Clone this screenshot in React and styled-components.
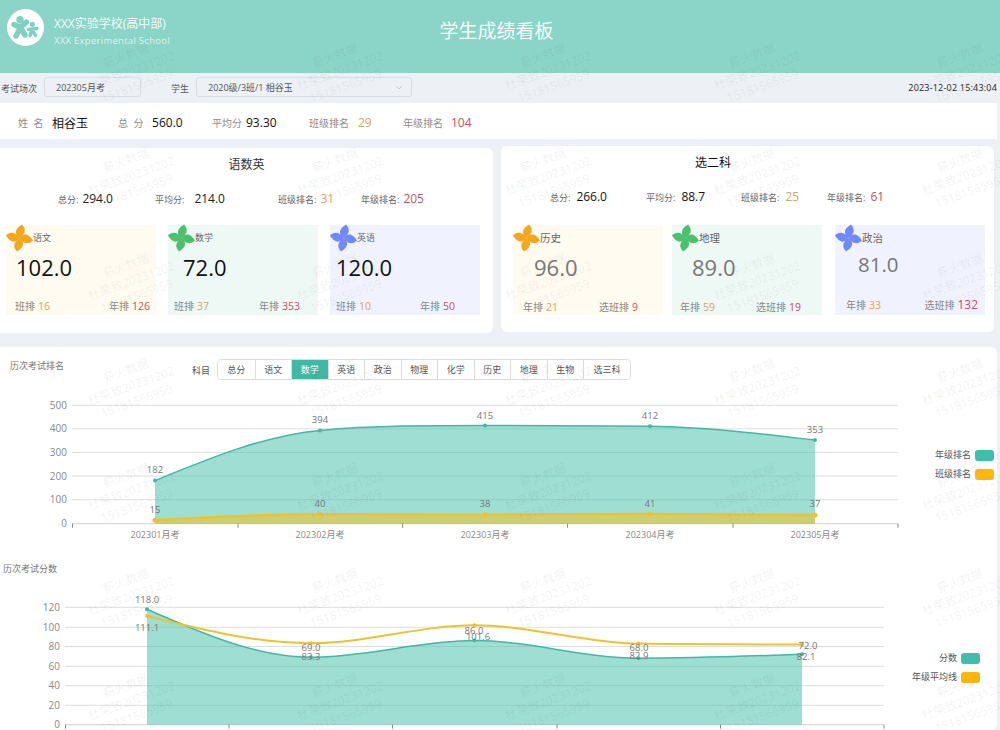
import styled, { createGlobalStyle } from "styled-components";

const GlobalStyle = createGlobalStyle`
  html, body {
    margin: 0;
    padding: 0;
    height: 730px;
    overflow: hidden;
    background: #edf0f5;
    font-family: "Open Sans", "Noto Sans CJK SC", sans-serif;
  }
`;

const Page = styled.div`
  position: relative;
  width: 1000px;
  height: 730px;
  overflow: hidden;
  background: #edf0f5;
`;

const Watermarks = styled.div`
  position: absolute;
  top: 18px;
  left: 27px;
  display: grid;
  grid-template-columns: repeat(5, 208.5px);
  grid-auto-rows: 105px;
  pointer-events: none;
`;

const Watermark = styled.div`
  display: flex;
  flex-direction: column;
  align-items: center;
  justify-content: center;
  font-size: 12px;
  line-height: 16px;
  color: rgba(60, 60, 60, 0.075);
  transform: rotate(-20deg);
`;

const Header = styled.header`
  display: grid;
  grid-template-columns: 1fr auto 1fr;
  height: 73px;
  padding: 9px 14px 0 7px;
  box-sizing: border-box;
  background: #8bd4c8;
  color: #fff;
`;

const Brand = styled.div`
  display: flex;
  align-items: flex-start;
  gap: 9px;
`;

const BrandText = styled.div`
  display: flex;
  flex-direction: column;
  padding-top: 7px;
`;

const SchoolName = styled.div`
  font-size: 12px;
  line-height: 16px;
  color: rgba(255, 255, 255, 0.92);
`;

const SchoolEnglish = styled.div`
  margin-top: 2px;
  font-size: 9.5px;
  line-height: 14px;
  letter-spacing: 0.28px;
  color: rgba(255, 255, 255, 0.72);
`;

const BoardTitle = styled.h1`
  margin: 8px 0 0;
  font-size: 19px;
  line-height: 28px;
  font-weight: 400;
  color: rgba(255, 255, 255, 0.95);
`;

const FilterBar = styled.div`
  display: flex;
  align-items: center;
  height: 30px;
  padding: 0 3px 2px 1px;
  box-sizing: border-box;
  font-size: 9px;
  color: #555;
`;

const FilterLabel = styled.span`
  margin-top: 3px;
  margin-left: ${(p) => p.$left || 0}px;
  margin-right: 7px;
`;

const SelectBox = styled.div`
  display: flex;
  align-items: center;
  justify-content: space-between;
  width: ${(p) => p.$width}px;
  height: 20px;
  padding: 1px 8px 0 11px;
  box-sizing: border-box;
  border: 1px solid #d8dce4;
  border-radius: 3px;
  color: #555;
`;

const Clock = styled.span`
  margin-left: auto;
  letter-spacing: 0.2px;
  color: #222;
`;

const InfoBar = styled.div`
  display: flex;
  align-items: center;
  width: 997px;
  height: 36px;
  padding: 3px 0 0 18px;
  box-sizing: border-box;
  background: #fff;
`;

const InfoItem = styled.div`
  display: flex;
  align-items: center;
  gap: ${(p) => p.$gap}px;
  width: ${(p) => p.$width}px;
`;

const InfoLabel = styled.span`
  font-size: 10px;
  letter-spacing: ${(p) => p.$spread || 0}px;
  color: #8c8c8c;
  white-space: pre;
`;

const InfoValue = styled.span`
  font-size: 12px;
  color: ${(p) => p.$color || "#111"};
`;

const CardRow = styled.div`
  display: flex;
  gap: 8px;
  margin-top: 7px;
`;

const Card = styled.section`
  width: ${(p) => p.$width}px;
  height: ${(p) => p.$height}px;
  margin-top: ${(p) => p.$top}px;
  padding-top: 9px;
  box-sizing: border-box;
  background: #fff;
  border-radius: ${(p) => (p.$flushLeft ? "0 6px 6px 0" : "6px")};
`;

const CardTitle = styled.h2`
  margin: 0;
  padding-right: ${(p) => p.$shift}px;
  font-size: 12px;
  line-height: 16px;
  font-weight: 400;
  text-align: center;
  color: ${(p) => p.$color};
`;

const StatRow = styled.div`
  display: grid;
  grid-template-columns: ${(p) => p.$columns};
  align-items: baseline;
  margin-top: 17px;
  padding-left: ${(p) => p.$left}px;
`;

const Stat = styled.div`
  display: flex;
  align-items: baseline;
  gap: ${(p) => p.$gap || 4}px;
`;

const StatLabel = styled.span`
  font-size: 9px;
  color: #666;
  white-space: nowrap;
`;

const StatValue = styled.span`
  font-size: 12px;
  color: ${(p) => p.$color || "#222"};
`;

const SubjectRow = styled.div`
  display: grid;
  grid-template-columns: ${(p) => p.$columns};
  margin-top: ${(p) => p.$top}px;
  padding-left: ${(p) => p.$left}px;
`;

const Subject = styled.div`
  display: flex;
  flex-direction: column;
  width: 150px;
  height: 90px;
  box-sizing: border-box;
  background: ${(p) => p.$bg};
`;

const SubjectHead = styled.div`
  display: flex;
  align-items: center;
  height: 28px;
  margin-top: -1px;
  font-size: ${(p) => p.$size}px;
  color: #666;
`;

const SubjectName = styled.span`
  margin-bottom: 2px;
`;

const SubjectScore = styled.div`
  height: 30px;
  margin-top: ${(p) => p.$top}px;
  padding-left: ${(p) => p.$left}px;
  font-size: ${(p) => p.$size}px;
  line-height: 30px;
  color: ${(p) => p.$color};
`;

const SubjectFoot = styled.div`
  display: flex;
  justify-content: space-between;
  align-items: baseline;
  margin-top: auto;
  padding: 0 ${(p) => p.$right}px ${(p) => p.$bottom}px ${(p) => p.$left}px;
`;

const Rank = styled.div`
  display: flex;
  align-items: baseline;
  gap: 3px;
  font-size: 10px;
  color: #888;
`;

const RankValue = styled.span`
  font-size: ${(p) => p.$size || 10.5}px;
  color: ${(p) => p.$color};
`;

const ChartPanel = styled.section`
  width: 997px;
  height: 383px;
  margin-top: 14px;
  overflow: hidden;
  background: #fff;
  border-radius: 0 6px 6px 0;
`;

const ChartHead = styled.div`
  display: flex;
  align-items: flex-start;
  height: 33px;
  padding: 12px 0 0 10px;
  box-sizing: border-box;
`;

const ChartTitle = styled.div`
  font-size: 9px;
  line-height: 14px;
  color: #777;
`;

const SecondTitle = styled(ChartTitle)`
  margin: 17px 0 0 3px;
`;

const TabLabel = styled.span`
  margin: 6px 7px 0 128px;
  font-size: 9px;
  line-height: 12px;
  color: #555;
`;

const Tabs = styled.div`
  display: flex;
  height: 21px;
  border: 1px solid #ddd;
  border-radius: 4px;
  overflow: hidden;
  box-sizing: border-box;
`;

const Tab = styled.div`
  width: ${(p) => p.$width || 36.5}px;
  box-sizing: border-box;
  border-left: ${(p) => (p.$first ? "none" : "1px solid #ddd")};
  font-size: 9px;
  line-height: 19px;
  text-align: center;
  color: ${(p) => (p.$active ? "#fff" : "#555")};
  background: ${(p) => (p.$active ? "#40b9a4" : "#fff")};
`;

const ChartRow = styled.div`
  display: flex;
  margin-top: ${(p) => p.$top}px;
`;

const ChartSvg = styled.svg`
  display: block;
  flex: none;
  font-family: "Open Sans", "Noto Sans CJK SC", sans-serif;
`;

const Legend = styled.div`
  display: flex;
  flex: 1;
  flex-direction: column;
  justify-content: flex-start;
  align-items: flex-end;
  gap: 7px;
  padding: ${(p) => p.$top}px ${(p) => p.$right}px 0 0;
`;

const LegendItem = styled.div`
  display: flex;
  align-items: center;
  gap: 4px;
  font-size: 9px;
  line-height: 12px;
  color: #555;
`;

const Swatch = styled.span`
  width: 19px;
  height: 11px;
  border-radius: 3px;
  background: ${(p) => p.$color};
`;

const TEAL = "#45b6a3";
const YELLOW = "#ecc232";
const ORANGE = "#d8a262";
const RED = "#c2525c";

const smoothPath = (pts) => {
  const n = pts.length - 1;
  const d = pts.slice(1).map((p, i) => (p[1] - pts[i][1]) / (p[0] - pts[i][0]));
  const m = pts.map((_, i) => {
    if (i === 0 || i === n) return 0;
    if (d[i - 1] * d[i] <= 0) return 0;
    const limit = 3 * Math.min(Math.abs(d[i - 1]), Math.abs(d[i]));
    return Math.sign(d[i]) * Math.min(Math.abs(d[i - 1] + d[i]) / 2, limit);
  });
  m[0] = (3 * d[0] - m[1]) / 2;
  m[n] = (3 * d[n - 1] - m[n - 1]) / 2;
  let path = `M${pts[0][0]} ${pts[0][1]}`;
  for (let i = 0; i < n; i++) {
    const h = (pts[i + 1][0] - pts[i][0]) / 3;
    path += ` C${pts[i][0] + h} ${pts[i][1] + m[i] * h} ${pts[i + 1][0] - h} ${pts[i + 1][1] - m[i + 1] * h} ${pts[i + 1][0]} ${pts[i + 1][1]}`;
  }
  return path;
};

const Pinwheel = ({ color }) => (
  <svg width="27" height="28" viewBox="0 0 27 28">
    {[0, 90, 180, 270].map((deg) => (
      <path
        key={deg}
        transform={`rotate(${deg} 13.5 14)`}
        d="M13.5 14 C9.5 11 7 6 16 0.5 C19.5 4 20.5 9.5 13.5 14 Z"
        fill={color}
      />
    ))}
  </svg>
);

const Logo = () => (
  <svg width="38" height="38" viewBox="0 0 38 38">
    <circle cx="18.5" cy="18.5" r="18.5" fill="#fff" />
    <g fill="none" stroke="#7fcfc2" strokeLinecap="round" strokeLinejoin="round">
      <path d="M7 15.5 L13.5 18.5 L19.5 13 M13.5 18.5 L9 27 M13.5 18.5 L18 26" strokeWidth="5.4" />
      <path d="M21.5 20.5 L30 19.5 M25.5 20.5 L23 26.5 M25.5 20.5 L28.5 26.5" strokeWidth="3.4" />
    </g>
    <circle cx="13" cy="10.7" r="3.7" fill="#7fcfc2" />
    <circle cx="25.3" cy="15.3" r="2.6" fill="#7fcfc2" />
  </svg>
);

const Chevron = () => (
  <svg width="8" height="5" viewBox="0 0 8 5">
    <path d="M1 1 L4 4 L7 1" fill="none" stroke="#c4c8d0" strokeWidth="1" />
  </svg>
);

const Axis = ({ left, right, zero, lines, ticks, yLabels }) => (
  <g>
    {lines.map((y) => (
      <line key={y} x1={left} x2={right} y1={y} y2={y} stroke="#dedede" strokeWidth="1" />
    ))}
    <line x1={left} x2={right} y1={zero} y2={zero} stroke="#cfcfcf" strokeWidth="1" />
    {ticks.map((x) => (
      <line key={x} x1={x} x2={x} y1={zero} y2={zero + 4} stroke="#888" strokeWidth="1" />
    ))}
    {yLabels.map(([label, y]) => (
      <text key={label} x={left - 5} y={y + 3.5} textAnchor="end" fontSize="10" fill="#888">
        {label}
      </text>
    ))}
  </g>
);

const Dots = ({ pts, color, r }) =>
  pts.map(([x, y]) => <circle key={x} cx={x} cy={y} r={r} fill={color} />);

const Labels = ({ items, size = 9.5 }) =>
  items.map(([text, x, y]) => (
    <text key={text + x} x={x} y={y} textAnchor="middle" fontSize={size} fill="#777">
      {text}
    </text>
  ));

const RankChart = () => {
  const xs = [155, 320, 485, 650, 815];
  const zero = 523.7;
  const toY = (v) => zero - v * 0.2368;
  const year = [182, 394, 415, 412, 353].map((v, i) => [xs[i], toY(v)]);
  const cls = [15, 40, 38, 41, 37].map((v, i) => [xs[i], toY(v)]);
  const yearLine = smoothPath(year);
  const clsLine = smoothPath(cls);
  return (
    <ChartSvg width="900" height="155" viewBox="0 390 900 155">
      <Axis
        left={72}
        right={898}
        zero={zero}
        lines={[405.3, 428.8, 452.4, 476, 499.7]}
        ticks={[72.5, 238, 402.5, 567.5, 733, 898]}
        yLabels={[["500", 405.3], ["400", 428.8], ["300", 452.4], ["200", 476], ["100", 499.7], ["0", zero]]}
      />
      <path d={`${yearLine} L815 ${zero} L155 ${zero} Z`} fill="rgba(64,190,168,0.5)" />
      <path d={`${clsLine} L815 ${zero} L155 ${zero} Z`} fill="rgba(250,190,20,0.5)" />
      <path d={yearLine} fill="none" stroke={TEAL} strokeWidth="1.5" />
      <path d={clsLine} fill="none" stroke={YELLOW} strokeWidth="2.5" />
      <Dots pts={year} color={TEAL} r={2} />
      <Dots pts={cls} color={YELLOW} r={2.5} />
      <Labels
        items={[
          ["182", 155, 473], ["394", 320, 423], ["415", 485, 419], ["412", 650, 419], ["353", 815, 433],
          ["15", 155, 513], ["40", 320, 507], ["38", 485, 507], ["41", 650, 507], ["37", 815, 507],
        ]}
      />
      {["202301月考", "202302月考", "202303月考", "202304月考", "202305月考"].map((label, i) => (
        <text key={label} x={xs[i]} y={537.5} textAnchor="middle" fontSize="9" fill="#888">
          {label}
        </text>
      ))}
    </ChartSvg>
  );
};

const ScoreChart = () => {
  const xs = [147, 311, 474.5, 638.5, 802];
  const zero = 724.7;
  const toY = (v) => zero - v * 0.978;
  const score = [118, 69, 86, 68, 72].map((v, i) => [xs[i], toY(v)]);
  const avg = [111.1, 83.3, 101.6, 82.9, 82.1].map((v, i) => [xs[i], toY(v)]);
  const scoreLine = smoothPath(score);
  return (
    <ChartSvg width="900" height="140" viewBox="0 590 900 140">
      <Axis
        left={65}
        right={884}
        zero={zero}
        lines={[607.3, 627.3, 646.5, 666.3, 685.7, 705.3]}
        ticks={[65.5, 229, 392.5, 557, 720.5, 884]}
        yLabels={[["120", 607.8], ["100", 627.3], ["80", 646.5], ["60", 666.3], ["40", 685.7], ["20", 705.3], ["0", zero]]}
      />
      <path d={`${scoreLine} L802 ${zero} L147 ${zero} Z`} fill="rgba(64,190,168,0.5)" />
      <path d={scoreLine} fill="none" stroke={TEAL} strokeWidth="1.5" />
      <path d={smoothPath(avg)} fill="none" stroke={YELLOW} strokeWidth="2" />
      <Dots pts={score} color={TEAL} r={2} />
      <Dots pts={avg} color={YELLOW} r={2} />
      <Labels
        items={[
          ["118.0", 147, 603], ["111.1", 147, 631], ["69.0", 311, 651], ["83.3", 311, 659.5],
          ["86.0", 474, 634], ["101.6", 478, 640], ["68.0", 639, 650.5], ["82.9", 639, 658.5],
          ["72.0", 808, 648.5], ["82.1", 806, 659.5],
        ]}
      />
    </ChartSvg>
  );
};

const WATERMARK_COUNT = 35;
const TABS = ["总分", "语文", "数学", "英语", "政治", "物理", "化学", "历史", "地理", "生物", "选三科"];

const SubjectCard = ({ name, score, icon, bg, headSize, scoreProps, footProps, ranks }) => (
  <Subject $bg={bg}>
    <SubjectHead $size={headSize}>
      <Pinwheel color={icon} />
      <SubjectName>{name}</SubjectName>
    </SubjectHead>
    <SubjectScore {...scoreProps}>{score}</SubjectScore>
    <SubjectFoot {...footProps}>
      <Rank>
        {ranks[0][0]} <RankValue $color={ORANGE}>{ranks[0][1]}</RankValue>
      </Rank>
      <Rank>
        {ranks[1][0]} <RankValue $color={RED} $size={ranks[1][2]}>{ranks[1][1]}</RankValue>
      </Rank>
    </SubjectFoot>
  </Subject>
);

const ORANGE_ICON = "#f2a71f";
const GREEN_ICON = "#4cc06e";
const BLUE_ICON = "#7189f7";
const ORANGE_BG = "#fffbf0";
const GREEN_BG = "#eef9f6";
const BLUE_BG = "#f0f3fe";

export default function App() {
  return (
    <Page>
      <GlobalStyle />
      <Header>
        <Brand>
          <Logo />
          <BrandText>
            <SchoolName>XXX实验学校(高中部)</SchoolName>
            <SchoolEnglish>XXX Experimental School</SchoolEnglish>
          </BrandText>
        </Brand>
        <BoardTitle>学生成绩看板</BoardTitle>
      </Header>

      <FilterBar>
        <FilterLabel>考试场次</FilterLabel>
        <SelectBox $width={97}>202305月考</SelectBox>
        <FilterLabel $left={30}>学生</FilterLabel>
        <SelectBox $width={216}>
          2020级/3班/1 相谷玉
          <Chevron />
        </SelectBox>
        <Clock>2023-12-02 15:43:04</Clock>
      </FilterBar>

      <InfoBar>
        <InfoItem $width={100} $gap={7}>
          <InfoLabel $spread={1.5}>姓 名</InfoLabel>
          <InfoValue>相谷玉</InfoValue>
        </InfoItem>
        <InfoItem $width={94} $gap={7}>
          <InfoLabel $spread={1.5}>总 分</InfoLabel>
          <InfoValue>560.0</InfoValue>
        </InfoItem>
        <InfoItem $width={97} $gap={4}>
          <InfoLabel>平均分</InfoLabel>
          <InfoValue>93.30</InfoValue>
        </InfoItem>
        <InfoItem $width={94} $gap={9}>
          <InfoLabel>班级排名</InfoLabel>
          <InfoValue $color={ORANGE}>29</InfoValue>
        </InfoItem>
        <InfoItem $width={100} $gap={8}>
          <InfoLabel>年级排名</InfoLabel>
          <InfoValue $color={RED}>104</InfoValue>
        </InfoItem>
      </InfoBar>

      <CardRow>
        <Card $width={493} $height={185} $top={2} $flushLeft>
          <CardTitle $shift={0} $color="#333">语数英</CardTitle>
          <StatRow $left={58} $columns="97px 123px 83px auto">
            <Stat><StatLabel>总分:</StatLabel><StatValue>294.0</StatValue></Stat>
            <Stat $gap={10}><StatLabel>平均分:</StatLabel><StatValue>214.0</StatValue></Stat>
            <Stat><StatLabel>班级排名:</StatLabel><StatValue $color={ORANGE}>31</StatValue></Stat>
            <Stat><StatLabel>年级排名:</StatLabel><StatValue $color={RED}>205</StatValue></Stat>
          </StatRow>
          <SubjectRow $left={6} $top={18} $columns="162px 162px 150px">
            <SubjectCard
              name="语文"
              score="102.0"
              icon={ORANGE_ICON}
              bg={ORANGE_BG}
              headSize={9}
              scoreProps={{ $left: 10, $size: 22, $top: 0, $color: "#111" }}
              footProps={{ $left: 9, $right: 6, $bottom: 2 }}
              ranks={[["班排", "16"], ["年排", "126"]]}
            />
            <SubjectCard
              name="数学"
              score="72.0"
              icon={GREEN_ICON}
              bg={GREEN_BG}
              headSize={9}
              scoreProps={{ $left: 15, $size: 22, $top: 0, $color: "#111" }}
              footProps={{ $left: 6, $right: 18, $bottom: 2 }}
              ranks={[["班排", "37"], ["年排", "353"]]}
            />
            <SubjectCard
              name="英语"
              score="120.0"
              icon={BLUE_ICON}
              bg={BLUE_BG}
              headSize={9}
              scoreProps={{ $left: 6, $size: 22, $top: 0, $color: "#111" }}
              footProps={{ $left: 6, $right: 25, $bottom: 2 }}
              ranks={[["班排", "10"], ["年排", "50"]]}
            />
          </SubjectRow>
        </Card>

        <Card $width={493} $height={186} $top={0}>
          <CardTitle $shift={69} $color="#111">选二科</CardTitle>
          <StatRow $left={49} $columns="96px 95px 86px auto">
            <Stat $gap={6}><StatLabel>总分:</StatLabel><StatValue $color="#111">266.0</StatValue></Stat>
            <Stat $gap={6}><StatLabel>平均分:</StatLabel><StatValue $color="#111">88.7</StatValue></Stat>
            <Stat $gap={6}><StatLabel>班级排名:</StatLabel><StatValue $color={ORANGE}>25</StatValue></Stat>
            <Stat $gap={5}><StatLabel>年级排名:</StatLabel><StatValue $color={RED}>61</StatValue></Stat>
          </StatRow>
          <SubjectRow $left={12} $top={20} $columns="159px 163px 150px">
            <SubjectCard
              name="历史"
              score="96.0"
              icon={ORANGE_ICON}
              bg={ORANGE_BG}
              headSize={10.5}
              scoreProps={{ $left: 21, $size: 22, $top: 0, $color: "#777" }}
              footProps={{ $left: 10, $right: 25, $bottom: 1 }}
              ranks={[["年排", "21"], ["选班排", "9"]]}
            />
            <SubjectCard
              name="地理"
              score="89.0"
              icon={GREEN_ICON}
              bg={GREEN_BG}
              headSize={10.5}
              scoreProps={{ $left: 20, $size: 22, $top: 0, $color: "#777" }}
              footProps={{ $left: 8, $right: 21, $bottom: 1 }}
              ranks={[["年排", "59"], ["选班排", "19"]]}
            />
            <SubjectCard
              name="政治"
              score="81.0"
              icon={BLUE_ICON}
              bg={BLUE_BG}
              headSize={10.5}
              scoreProps={{ $left: 23, $size: 20.5, $top: -3, $color: "#777" }}
              footProps={{ $left: 11, $right: 7, $bottom: 2 }}
              ranks={[["年排", "33"], ["选班排", "132", 12]]}
            />
          </SubjectRow>
        </Card>
      </CardRow>

      <ChartPanel>
        <ChartHead>
          <ChartTitle>历次考试排名</ChartTitle>
          <TabLabel>科目</TabLabel>
          <Tabs>
            {TABS.map((tab, i) => (
              <Tab key={tab} $first={i === 0} $active={tab === "数学"} $width={tab === "选三科" ? 47 : undefined}>
                {tab}
              </Tab>
            ))}
          </Tabs>
        </ChartHead>
        <ChartRow $top={10}>
          <RankChart />
          <Legend $top={59} $right={3}>
            <LegendItem>年级排名<Swatch $color="#3fbfaa" /></LegendItem>
            <LegendItem>班级排名<Swatch $color="#fbb80f" /></LegendItem>
          </Legend>
        </ChartRow>
        <SecondTitle>历次考试分数</SecondTitle>
        <ChartRow $top={14}>
          <ScoreChart />
          <Legend $top={62} $right={17}>
            <LegendItem>分数<Swatch $color="#3fbfaa" /></LegendItem>
            <LegendItem>年级平均线<Swatch $color="#fbb80f" /></LegendItem>
          </Legend>
        </ChartRow>
      </ChartPanel>

      <Watermarks>
        {Array.from({ length: WATERMARK_COUNT }, (_, i) => (
          <Watermark key={i}>
            <span>薪火数据</span>
            <span>杜荣致20231202</span>
            <span>15181565959</span>
          </Watermark>
        ))}
      </Watermarks>
    </Page>
  );
}
